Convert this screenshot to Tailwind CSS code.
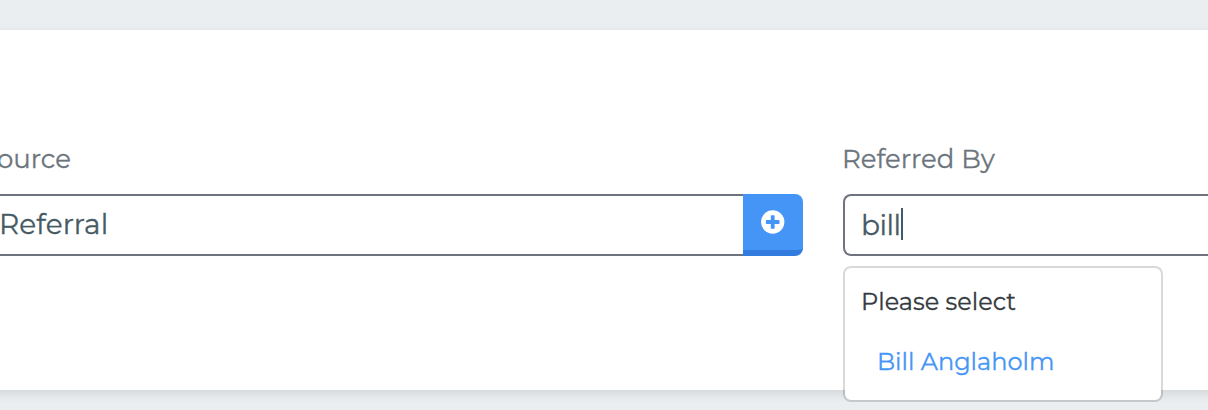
<!DOCTYPE html>
<html lang="en">
<head>
    <meta charset="UTF-8">
    <meta name="viewport" content="width=device-width, initial-scale=1.0">
    <title>Referral</title>
    <script src="https://cdn.jsdelivr.net/npm/@tailwindcss/browser@4"></script>
</head>
<body class="bg-[#eaeef1] font-['Montserrat','Inter',sans-serif] [-webkit-text-stroke:0.3px] h-[410px] overflow-hidden pt-[30px]">
    <div class="-mx-[18px] bg-white h-[360px] pt-[108px] shadow-[0_4px_10px_-1px_rgba(0,0,0,0.11)]">
        <div class="flex gap-10">
            <!-- Source -->
            <div class="w-[821px] shrink-0">
                <label class="block h-14 -ml-px pt-[3px] text-[26px] leading-9 text-[#6c757d]" for="source">Source</label>
                <div class="flex h-[62px]">
                    <div id="source" class="flex-1 border-2 border-r-0 border-[#6e737e] rounded-l-lg pl-[15px] text-[28px] leading-[56px] tracking-[0.1px] text-[#455a64]">Referral</div>
                    <button type="button" class="w-[60px] h-[62px] flex justify-center pt-4 bg-[#4595f6] border-b-[6px] border-[#327ce0] rounded-r-lg">
                        <svg class="size-6" viewBox="0 0 24 24">
                            <circle cx="11.7" cy="12" r="11.7" fill="#fff"/>
                            <path d="M10.4 5.2h2.6a.6.6 0 0 1 .6.6v4.3h4.3a.6.6 0 0 1 .6.6v2.6a.6.6 0 0 1-.6.6h-4.3v4.3a.6.6 0 0 1-.6.6h-2.6a.6.6 0 0 1-.6-.6v-4.3H5.5a.6.6 0 0 1-.6-.6v-2.6a.6.6 0 0 1 .6-.6h4.3V5.8a.6.6 0 0 1 .6-.6z" fill="#4595f6"/>
                        </svg>
                    </button>
                </div>
            </div>

            <!-- Referred by -->
            <div class="relative flex-1">
                <label class="block h-14 -ml-px pt-[3px] text-[26px] leading-9 text-[#6c757d]">Referred By</label>
                <div class="flex items-center h-[62px] border-2 border-r-0 border-[#6e737e] rounded-l-lg pl-4 pb-0.5 text-[28px] text-[#455a64]">
                    <span class="pt-px tracking-[-0.5px]">bill</span>
                    <span class="w-0.5 h-8 bg-[#455a64]"></span>
                </div>
                <div class="absolute left-0 top-32 w-80 h-[136px] bg-white bg-clip-padding border-2 border-black/15 rounded-lg px-4 pt-3.5 text-[24px] leading-10">
                    <div class="text-[#343a40]">Please select</div>
                    <div class="pl-4 pt-5 text-[#4595f6]">Bill Anglaholm</div>
                </div>
            </div>
        </div>
    </div>
</body>
</html>
